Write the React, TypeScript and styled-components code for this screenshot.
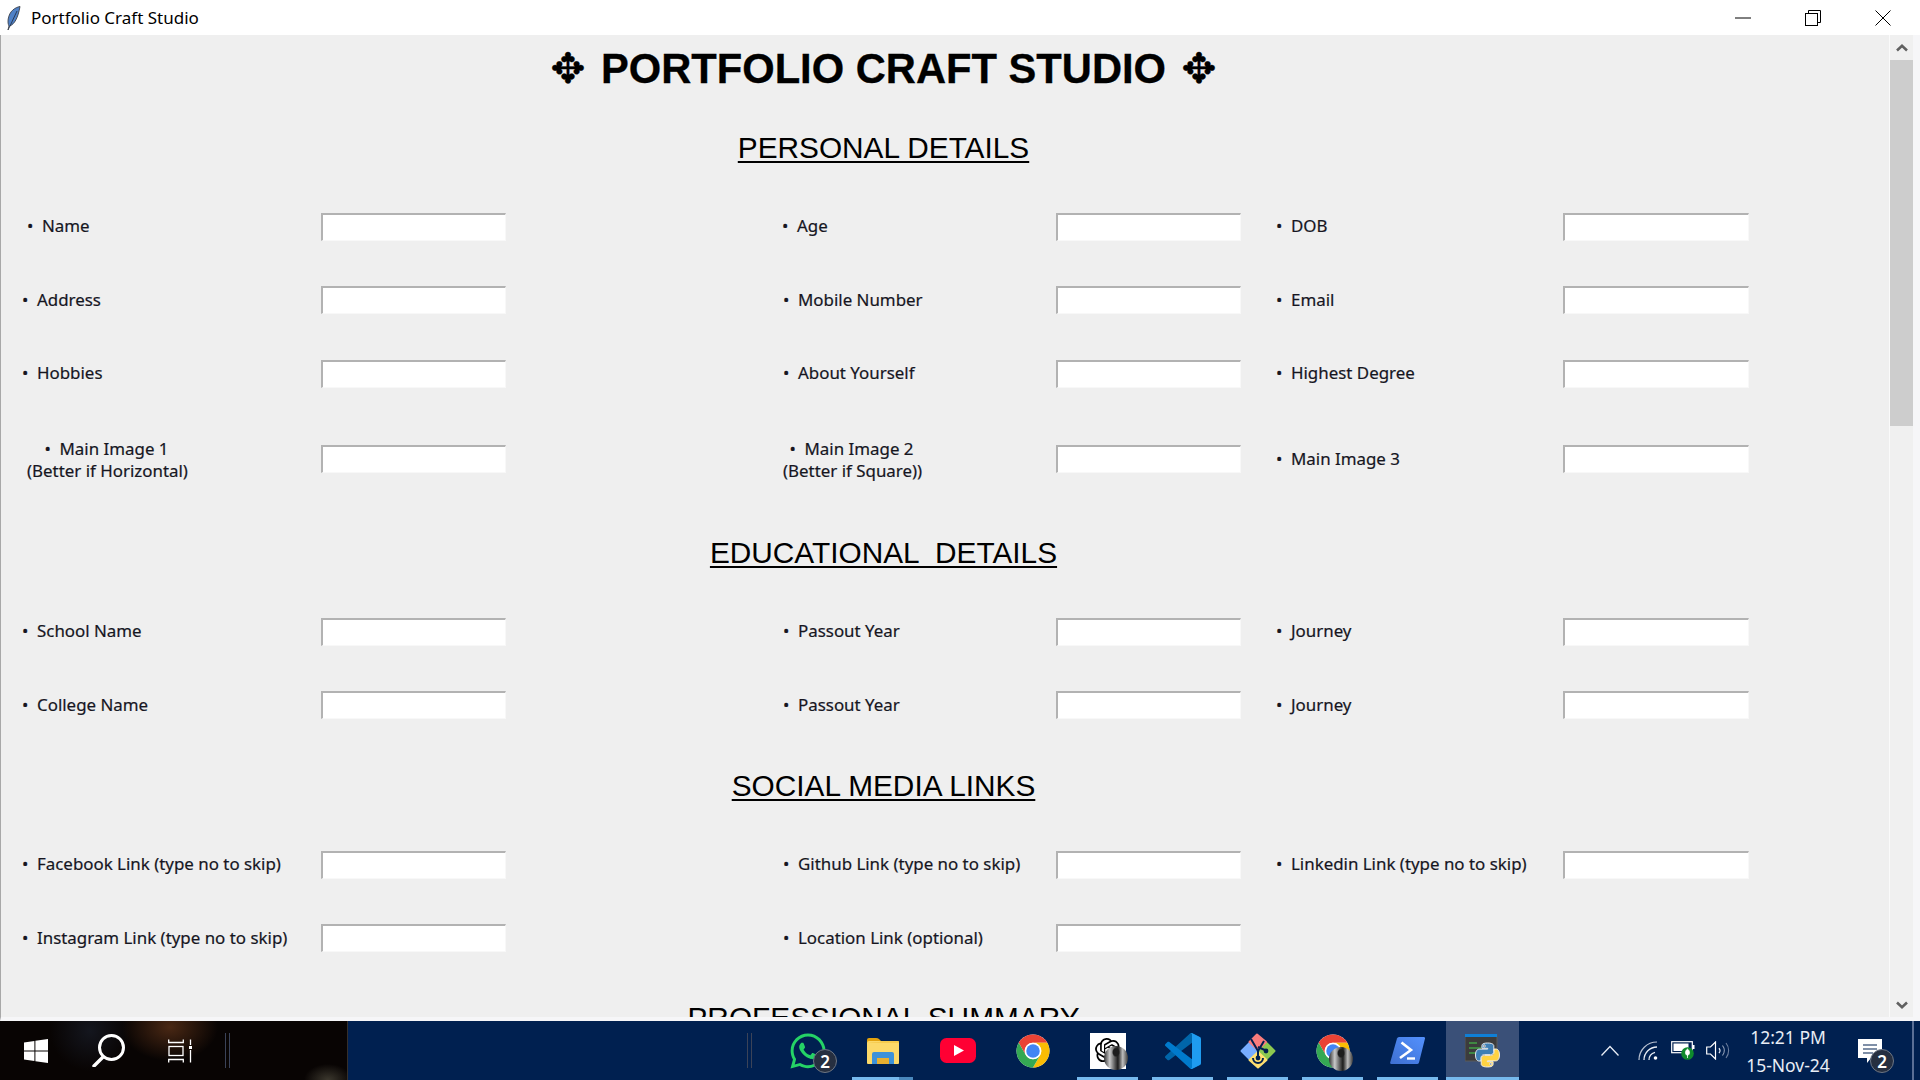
import { FaWhatsapp } from "react-icons/fa";
import { SiOpenai } from "react-icons/si";
import styled, { createGlobalStyle } from "styled-components";

const GlobalStyle = createGlobalStyle`
  html, body { margin: 0; padding: 0; width: 1920px; height: 1080px; overflow: hidden; }
  body { font-family: "Noto Sans", "Open Sans", sans-serif; background: #efefef; }
`;

const Screen = styled.div`
  display: flex;
  flex-direction: column;
  width: 1920px;
  height: 1080px;
`;

/* window title bar */
const TitleBar = styled.header`
  display: flex;
  align-items: center;
  height: 35px;
  flex: none;
  padding-left: 7px;
  background: #fff;
`;
const AppName = styled.span`
  margin-left: 10px;
  font-size: 17px;
  color: #000;
`;
const CaptionButtons = styled.div`
  display: flex;
  margin-left: auto;
  padding-right: 2px;
  align-items: center;
  height: 100%;
`;
const CaptionButton = styled.span`
  display: flex;
  justify-content: center;
  align-items: center;
  width: 70px;
  height: 100%;
`;

/* window body */
const Body = styled.div`
  display: flex;
  flex: 1;
  min-height: 0;
  background: #efefef;
  border-left: 1px solid #a8a8a8;
  border-bottom: 4px solid #f6f6f8;
`;
const Main = styled.main`
  width: 1765px;
  flex: none;
  overflow: hidden;
`;
const Spacer = styled.div`
  width: 123px;
  flex: none;
`;
const Heading = styled.h1`
  margin: 0;
  height: 68px;
  font: bold 41.7px/68px "Liberation Sans", "DejaVu Sans", sans-serif;
  color: #000;
  text-align: center;
  white-space: pre;
  -webkit-text-stroke: 0.3px #000;
`;
const Ornament = styled.span`
  margin: 0 4px;
`;
const SectionTitle = styled.h2<{ $top: number; $wordSpacing?: number }>`
  margin: ${(p) => p.$top}px 0 22.5px;
  height: 40px;
  font: normal 29.8px/40px "Liberation Sans", sans-serif;
  color: #000;
  text-align: center;
  white-space: pre;
  word-spacing: ${(p) => p.$wordSpacing ?? 0}px;
  text-decoration: underline;
  text-decoration-thickness: 2px;
  text-underline-offset: 3px;
`;
const FieldGrid = styled.section<{ $rows: string }>`
  display: grid;
  grid-template-columns: 320px 185px 550px 185px 322px 186px;
  grid-template-rows: ${(p) => p.$rows};
  align-items: center;
`;
const Label = styled.label<{ $indent: number; $width?: number }>`
  display: block;
  margin-top: ${(p) => (p.$width ? 2 : -1)}px;
  padding-left: ${(p) => p.$indent}px;
  ${(p) => (p.$width ? `width: ${p.$width}px; text-align: center;` : "")}
  font-size: 16.9px;
  line-height: 22px;
  color: #16161f;
  white-space: nowrap;
  -webkit-text-stroke: 0.2px #16161f;
`;
const Bullet = styled.span`
  display: inline-block;
  width: 15px;
  text-align: left;
`;
const TextInput = styled.input`
  box-sizing: border-box;
  display: block;
  width: 100%;
  height: 28px;
  margin: 0;
  padding: 0;
  background: #fff;
  border-style: solid;
  border-width: 2px 1px 1px 2px;
  border-color: #b2b2b2 #f8f8f8 #f8f8f8 #b2b2b2;
  outline: none;
`;

/* scroll bar */
const ScrollBar = styled.div`
  display: flex;
  flex-direction: column;
  align-items: center;
  flex: none;
  box-sizing: border-box;
  width: 24px;
  border-left: 1px solid #fafafa;
  background: #f0f0f0;
`;
const ScrollArrow = styled.div`
  display: flex;
  justify-content: center;
  align-items: center;
  height: 25px;
  width: 100%;
  flex: none;
`;
const ScrollThumb = styled.div`
  width: 100%;
  height: 366px;
  flex: none;
  background: #cdcdcd;
`;
const ScrollTrack = styled.div`
  flex: 1;
`;
const WindowEdge = styled.div`
  flex: 1;
  background: #f6f6f8;
`;

/* taskbar */
const Taskbar = styled.footer`
  display: flex;
  align-items: stretch;
  height: 59px;
  flex: none;
  background: #002050;
`;
const Wallpaper = styled.div`
  display: flex;
  align-items: center;
  box-sizing: border-box;
  width: 348px;
  flex: none;
  border-right: 1px solid #352f2a;
  background:
    radial-gradient(ellipse 48px 34px at 170px 6px, #4a2814 0%, rgba(74, 40, 20, 0) 100%),
    radial-gradient(ellipse 24px 16px at 328px 59px, #3c382e 0%, rgba(60, 56, 46, 0) 100%),
    radial-gradient(ellipse 40px 40px at 90px 10px, #14161e 0%, rgba(20, 22, 30, 0) 100%),
    #080403;
`;
const Slot = styled.div<{ $width: number }>`
  position: relative;
  display: flex;
  justify-content: center;
  align-items: center;
  width: ${(p) => p.$width}px;
  flex: none;
`;
const Dividers = styled.div<{ $left?: number }>`
  align-self: center;
  width: 3px;
  height: 35px;
  flex: none;
  margin-left: ${(p) => p.$left ?? 0}px;
  border-left: 1px solid #3b4358;
  border-right: 1px solid #3b4358;
`;
const PinnedApps = styled.div`
  display: flex;
  gap: 2px;
  margin-left: 19px;
`;
const AppSlot = styled.div<{ $active?: boolean }>`
  position: relative;
  display: flex;
  justify-content: center;
  align-items: center;
  width: 73px;
  background: ${(p) => (p.$active ? "#3a5078" : "transparent")};
`;
const RunningMark = styled.span<{ $full?: boolean }>`
  position: absolute;
  bottom: 0;
  left: ${(p) => (p.$full ? 0 : 6)}px;
  width: ${(p) => (p.$full ? 73 : 61)}px;
  height: 3px;
  background: #76b9ed;
`;
const StackedMark = styled(RunningMark)`
  width: 47px;
  &::after {
    content: "";
    position: absolute;
    left: 47px;
    width: 14px;
    height: 3px;
    background: #4a88bd;
  }
`;
const CountBadge = styled.span<{ $x: number; $y: number }>`
  position: absolute;
  left: ${(p) => p.$x}px;
  top: ${(p) => p.$y}px;
  display: flex;
  justify-content: center;
  align-items: center;
  box-sizing: border-box;
  width: 24px;
  height: 24px;
  border-radius: 50%;
  border: 1px solid #6d7684;
  background: #262f40;
  color: #fff;
  font: 600 17px/1 "Noto Sans", sans-serif;
`;
const Avatar = styled.span<{ $x: number; $y: number }>`
  position: absolute;
  left: ${(p) => p.$x}px;
  top: ${(p) => p.$y}px;
  width: 24px;
  height: 24px;
  border-radius: 50%;
  background:
    radial-gradient(ellipse 4px 5px at 50% 26%, #1d1d1d 0%, #1d1d1d 70%, rgba(0, 0, 0, 0) 100%),
    linear-gradient(90deg, #333 0%, #c9c9c9 24%, #555 46%, #1c1c1c 58%, #bdbdbd 78%, #3a3a3a 100%);
`;
const OpenAiTile = styled.span`
  display: flex;
  justify-content: center;
  align-items: center;
  width: 36px;
  height: 36px;
  background: #fff;
  color: #000;
`;
const Tray = styled.div`
  display: flex;
  margin-left: 71px;
`;
const Clock = styled.div`
  display: flex;
  flex-direction: column;
  align-items: center;
  justify-content: center;
  gap: 6px;
  width: 102px;
  flex: none;
  color: #e8edf5;
  font-size: 17.5px;
  line-height: 22px;
  white-space: nowrap;
`;
const TaskbarEnd = styled.div`
  flex: 1;
  margin-left: 11px;
  border-left: 2px solid #5a6f96;
`;

type Field = { label: string; indent: number };

const personalRows: Field[] = [
  { label: "Name", indent: 26 },
  { label: "Age", indent: 276 },
  { label: "DOB", indent: 35 },
  { label: "Address", indent: 21 },
  { label: "Mobile Number", indent: 277 },
  { label: "Email", indent: 35 },
  { label: "Hobbies", indent: 21 },
  { label: "About Yourself", indent: 277 },
  { label: "Highest Degree", indent: 35 },
];
const educationRows: Field[] = [
  { label: "School Name", indent: 21 },
  { label: "Passout Year", indent: 277 },
  { label: "Journey", indent: 35 },
  { label: "College Name", indent: 21 },
  { label: "Passout Year", indent: 277 },
  { label: "Journey", indent: 35 },
];
const socialRows: Field[] = [
  { label: "Facebook Link (type no to skip)", indent: 21 },
  { label: "Github Link (type no to skip)", indent: 277 },
  { label: "Linkedin Link (type no to skip)", indent: 35 },
  { label: "Instagram Link (type no to skip)", indent: 21 },
  { label: "Location Link (optional)", indent: 277 },
];

const renderFields = (fields: Field[]) =>
  fields.map((f, i) => [
    <Label key={`l${i}`} $indent={f.indent}>
      <Bullet>•</Bullet>
      {f.label}
    </Label>,
    <TextInput key={`i${i}`} type="text" />,
  ]);

const FeatherIcon = () => (
  <svg width="14" height="24" viewBox="0 0 14 24">
    <path
      d="M13 0.5C8 1.5 2.5 5 1.2 13C0.8 16 1 18 2 20L1 24L2.9 20C7.5 18 11 12 13 0.5Z"
      fill="#4f81c7"
      stroke="#3a3f4a"
      strokeWidth="0.9"
    />
    <path d="M10 5L3 20" stroke="#1f2a3a" strokeWidth="0.8" />
  </svg>
);

const MinimizeIcon = () => (
  <svg width="16" height="2" viewBox="0 0 16 2">
    <path d="M0 1H16" stroke="#000" strokeWidth="1" />
  </svg>
);

const RestoreIcon = () => (
  <svg width="16" height="16" viewBox="0 0 16 16" fill="none" stroke="#000" strokeWidth="1">
    <rect x="0.5" y="3.5" width="12" height="12" />
    <path d="M3.5 3.5V0.5H15.5V12.5H12.5" />
  </svg>
);

const CloseIcon = () => (
  <svg width="16" height="16" viewBox="0 0 16 16" stroke="#000" strokeWidth="1">
    <path d="M0.5 0.5L15.5 15.5M15.5 0.5L0.5 15.5" />
  </svg>
);

const ArrowIcon = ({ down }: { down?: boolean }) => (
  <svg width="12" height="8" viewBox="0 0 12 8" fill="none" stroke="#606060" strokeWidth="2.6">
    <path d={down ? "M1 1.5L6 6.2L11 1.5" : "M1 6.5L6 1.8L11 6.5"} />
  </svg>
);

const WindowsIcon = () => (
  <svg width="24" height="24" viewBox="0 0 24 24" fill="#fff">
    <polygon points="0,3.4 10.4,1.9 10.4,11.4 0,11.4" />
    <polygon points="11.4,1.8 24,0 24,11.4 11.4,11.4" />
    <polygon points="0,12.6 10.4,12.6 10.4,22.1 0,20.6" />
    <polygon points="11.4,12.6 24,12.6 24,24 11.4,22.2" />
  </svg>
);

const SearchIcon = () => (
  <svg width="33" height="33" viewBox="0 0 33 33" fill="none" stroke="#fff">
    <circle cx="19.5" cy="13.5" r="12" strokeWidth="3" />
    <path d="M11 23L2 32" strokeWidth="3.4" strokeLinecap="round" />
  </svg>
);

const TaskViewIcon = () => (
  <svg width="24" height="24" viewBox="0 0 24 24" fill="none" stroke="#fff" strokeWidth="1.3">
    <rect x="1" y="7.5" width="14" height="9" />
    <path d="M0.7 0.5V3.5H15.3V0.5M0.7 23.5V20.5H15.3V23.5M22.5 0.5V6M22.5 11V23.5" />
    <rect x="21" y="7" width="3" height="3" fill="#fff" stroke="none" />
  </svg>
);

const ExplorerIcon = () => (
  <svg width="32" height="26" viewBox="0 0 32 26">
    <path d="M0 5V2Q0 0 2 0H9Q11 0 12 1L15 4V5Z" fill="#e3a20d" />
    <path d="M0 5Q0 3 2 3H31Q32 3 32 4V25Q32 26 31 26H1Q0 26 0 25Z" fill="#fcd969" />
    <path d="M0 5Q6 4 12 4L15 3H31Q32 3 32 5Z" fill="#f4c542" opacity="0.7" />
    <path d="M5 26V16Q5 14 7 14H25Q27 14 27 16V26H22V20H10V26Z" fill="#3d92d9" />
    <rect x="10" y="20" width="12" height="6" fill="#e8b030" />
  </svg>
);

const YoutubeIcon = () => (
  <svg width="36" height="25" viewBox="0 0 36 25">
    <rect width="36" height="25" rx="6.5" fill="#ff0033" />
    <polygon points="14,7 14,18 24,12.5" fill="#fff" />
  </svg>
);

const CHROME_SECTOR =
  "M4.95 13A22 22 0 0 1 43.05 13H24A11 11 0 0 0 14.47 29.5Z";

const ChromeIcon = () => (
  <svg width="36" height="36" viewBox="0 0 48 48">
    <circle cx="24" cy="24" r="22" fill="#fff" />
    <path d={CHROME_SECTOR} fill="#ea4335" />
    <path d={CHROME_SECTOR} fill="#fbbc04" transform="rotate(120 24 24)" />
    <path d={CHROME_SECTOR} fill="#34a853" transform="rotate(240 24 24)" />
    <circle cx="24" cy="24" r="11" fill="#fff" />
    <circle cx="24" cy="24" r="9" fill="#4285f4" />
  </svg>
);

const VsCodeIcon = () => (
  <svg width="36" height="36" viewBox="0 0 100 100">
    <path
      d="M96.46 10.8L75.86 0.88C73.47 -0.27 70.62 0.21 68.75 2.08L1.3 63.58C-0.52 65.24 -0.51 68.09 1.3 69.75L6.81 74.75C8.3 76.1 10.53 76.2 12.13 74.99L93.36 13.37C96.09 11.3 100 13.25 100 16.67V16.43C100 14.03 98.62 11.84 96.46 10.8Z"
      fill="#0065a9"
    />
    <path
      d="M96.46 89.2L75.86 99.12C73.47 100.27 70.62 99.79 68.75 97.92L1.3 36.42C-0.52 34.76 -0.51 31.91 1.3 30.25L6.81 25.25C8.3 23.9 10.53 23.8 12.13 25.01L93.36 86.63C96.09 88.7 100 86.75 100 83.33V83.57C100 85.97 98.62 88.16 96.46 89.2Z"
      fill="#007acc"
    />
    <path
      d="M75.86 99.13C73.47 100.27 70.62 99.79 68.75 97.92C71.06 100.22 75 98.59 75 95.33V4.67C75 1.41 71.06 -0.22 68.75 2.08C70.62 0.21 73.47 -0.27 75.86 0.87L96.46 10.78C98.62 11.82 100 14.01 100 16.41V83.59C100 85.99 98.62 88.18 96.46 89.22L75.86 99.13Z"
      fill="#1f9cf0"
    />
  </svg>
);

const KrakenIcon = () => (
  <svg width="36" height="36" viewBox="0 0 36 36" strokeLinejoin="round">
    <polygon points="1.5,18 9.5,10 17.5,18 9.5,26" fill="#78adff" stroke="#78adff" strokeWidth="2" />
    <polygon points="18.5,18 26.5,10 34.5,18 26.5,26" fill="#8cc850" stroke="#8cc850" strokeWidth="2" />
    <polygon points="9.5,9 17,1.5 26,9 18,17" fill="#f97c7c" stroke="#f97c7c" strokeWidth="2" />
    <polygon points="9.5,27 18,19 26.5,27 18,34.5" fill="#ffe070" stroke="#ffe070" strokeWidth="2" />
    <g fill="none" stroke="#002050" strokeWidth="2">
      <path d="M11 6L18 18L24 8" />
      <path d="M18 18V24" />
      <path d="M13 25A5 5 0 0 0 23 25" />
      <path d="M18 14L27 18" />
    </g>
    <circle cx="18" cy="25" r="2.4" fill="#002050" />
    <circle cx="26" cy="18" r="2.4" fill="#002050" />
  </svg>
);

const PowerShellIcon = () => (
  <svg width="35" height="27" viewBox="0 0 35 27">
    <defs>
      <linearGradient id="psFill" x1="1" y1="0" x2="0" y2="1">
        <stop offset="0" stopColor="#5391fe" />
        <stop offset="1" stopColor="#3e6fd0" />
      </linearGradient>
    </defs>
    <path
      d="M7 1.5Q7.5 0 9 0H33.5Q35.3 0 35 1.5L29 25.5Q28.5 27 27 27H1.5Q-0.2 27 0.2 25.5Z"
      fill="url(#psFill)"
    />
    <path d="M11.5 5.5L21 13L10 21" fill="none" stroke="#fff" strokeWidth="2.6" />
    <path d="M17 21.5H25" stroke="#fff" strokeWidth="2.4" />
  </svg>
);

const PYTHON_HALF =
  "M12 0C6 0 6.4 2.6 6.4 2.6V5.3H12.2V6.1H4C4 6.1 0 5.7 0 12C0 18.2 3.5 18 3.5 18H5.5V15.1C5.5 15.1 5.4 11.6 9 11.6H15C15 11.6 18.3 11.7 18.3 8.4V3C18.3 3 18.8 0 12 0ZM8.7 1.9A1.1 1.1 0 1 1 8.7 4.1A1.1 1.1 0 1 1 8.7 1.9Z";

const PythonIdleIcon = () => (
  <svg width="36" height="34" viewBox="0 0 36 34">
    <rect x="0" y="1" width="32" height="26" fill="#3c3c3c" stroke="#5b5b5b" />
    <rect x="0" y="0" width="32" height="3" fill="#0f7fd6" />
    <path d="M4 9H12M4 14H16M4 19H11" stroke="#41a045" strokeWidth="1.3" />
    <g transform="translate(10.5 9)" stroke="#f5f5f5" strokeWidth="0.9" fillRule="evenodd">
      <path d={PYTHON_HALF} fill="#3f7fb5" />
      <path d={PYTHON_HALF} fill="#ffd343" transform="rotate(180 12 12)" />
    </g>
  </svg>
);

const ChevronIcon = () => (
  <svg width="18" height="11" viewBox="0 0 18 11" fill="none" stroke="#e8edf5" strokeWidth="1.3">
    <path d="M0.5 10.5L9 1.5L17.5 10.5" />
  </svg>
);

const WifiIcon = () => (
  <svg width="20" height="19" viewBox="0 0 20 19" fill="none">
    <path d="M1 19A18 18 0 0 1 19 1" stroke="#b9c2d2" strokeWidth="1.2" />
    <path d="M6 19A13 13 0 0 1 19 6" stroke="#e8edf5" strokeWidth="1.3" />
    <path d="M11 19A8 8 0 0 1 17 11.3" stroke="#e8edf5" strokeWidth="1.3" />
    <circle cx="17.5" cy="17" r="1.8" fill="#fff" />
  </svg>
);

const BatteryIcon = () => (
  <svg width="24" height="22" viewBox="0 0 24 22">
    <rect x="0.7" y="1.7" width="20.6" height="11" fill="none" stroke="#fff" strokeWidth="1.2" />
    <rect x="2.5" y="3.5" width="15" height="7.5" fill="#fff" />
    <rect x="21.5" y="5" width="2" height="4" fill="#fff" />
    <circle cx="16.5" cy="13.5" r="6.3" fill="#0f8a2c" />
    <path d="M16.5 9C13.8 11 13.8 14.5 16.5 15.5C19.2 14.5 19.2 11 16.5 9ZM16.5 13V18" fill="#fff" stroke="#fff" strokeWidth="0.8" />
  </svg>
);

const SpeakerIcon = () => (
  <svg width="24" height="19" viewBox="0 0 24 19" fill="none">
    <path d="M0.7 6H4.5L9.5 1V18L4.5 13H0.7Z" stroke="#fff" strokeWidth="1.2" />
    <path d="M13 7A4 4 0 0 1 13 12" stroke="#e8edf5" strokeWidth="1.2" />
    <path d="M16.5 4.5A8 8 0 0 1 16.5 14.5" stroke="#9aa8bf" strokeWidth="1.1" />
    <path d="M20 2A12 12 0 0 1 20 17" stroke="#6d7f9f" strokeWidth="1.1" />
  </svg>
);

const NotificationIcon = () => (
  <svg width="24" height="24" viewBox="0 0 24 24">
    <path d="M0 0H24V19H13L9 24V19H0Z" fill="#fff" />
    <path d="M5 6H19M5 10H19M5 14H15" stroke="#002050" strokeWidth="1.2" />
  </svg>
);

const App = () => {
  return (
    <>
      <GlobalStyle />
      <Screen>
        <TitleBar>
          <FeatherIcon />
          <AppName>Portfolio Craft Studio</AppName>
          <CaptionButtons>
            <CaptionButton>
              <MinimizeIcon />
            </CaptionButton>
            <CaptionButton>
              <RestoreIcon />
            </CaptionButton>
            <CaptionButton>
              <CloseIcon />
            </CaptionButton>
          </CaptionButtons>
        </TitleBar>

        <Body>
          <Main>
            <Heading>
              <Ornament>✥</Ornament> PORTFOLIO CRAFT STUDIO <Ornament>✥</Ornament>
            </Heading>

            <SectionTitle $top={24.5}>PERSONAL DETAILS</SectionTitle>
            <FieldGrid $rows="73.5px 73.5px 73.5px 97.5px">
              {renderFields(personalRows)}
              <Label $indent={26} $width={159}>
                <Bullet>•</Bullet>Main Image 1
                <br />
                (Better if Horizontal)
              </Label>
              <TextInput type="text" />
              <Label $indent={277} $width={137}>
                <Bullet>•</Bullet>Main Image 2
                <br />
                (Better if Square))
              </Label>
              <TextInput type="text" />
              <Label $indent={35}>
                <Bullet>•</Bullet>Main Image 3
              </Label>
              <TextInput type="text" />
            </FieldGrid>

            <SectionTitle $top={24.5}>EDUCATIONAL  DETAILS</SectionTitle>
            <FieldGrid $rows="73.5px 73.5px">{renderFields(educationRows)}</FieldGrid>

            <SectionTitle $top={23.5}>SOCIAL MEDIA LINKS</SectionTitle>
            <FieldGrid $rows="73.5px 73.5px">{renderFields(socialRows)}</FieldGrid>

            <SectionTitle $top={22.5} $wordSpacing={-3.5}>PROFESSIONAL  SUMMARY</SectionTitle>
          </Main>
          <Spacer />
          <ScrollBar>
            <ScrollArrow>
              <ArrowIcon />
            </ScrollArrow>
            <ScrollThumb />
            <ScrollTrack />
            <ScrollArrow>
              <ArrowIcon down />
            </ScrollArrow>
          </ScrollBar>
          <WindowEdge />
        </Body>

        <Taskbar>
          <Wallpaper>
            <Slot $width={72}>
              <WindowsIcon />
            </Slot>
            <Slot $width={72}>
              <SearchIcon />
            </Slot>
            <Slot $width={72}>
              <TaskViewIcon />
            </Slot>
            <Dividers $left={9} />
          </Wallpaper>
          <Dividers $left={399} />
          <PinnedApps>
            <AppSlot>
              <FaWhatsapp size={40} color="#25d366" />
              <CountBadge $x={42} $y={28}>2</CountBadge>
            </AppSlot>
            <AppSlot>
              <ExplorerIcon />
              <StackedMark />
            </AppSlot>
            <AppSlot>
              <YoutubeIcon />
            </AppSlot>
            <AppSlot>
              <ChromeIcon />
            </AppSlot>
            <AppSlot>
              <OpenAiTile>
                <SiOpenai size={26} />
              </OpenAiTile>
              <Avatar $x={33} $y={25} />
              <RunningMark />
            </AppSlot>
            <AppSlot>
              <VsCodeIcon />
              <RunningMark />
            </AppSlot>
            <AppSlot>
              <KrakenIcon />
              <RunningMark />
            </AppSlot>
            <AppSlot>
              <ChromeIcon />
              <Avatar $x={33} $y={26} />
              <RunningMark />
            </AppSlot>
            <AppSlot>
              <PowerShellIcon />
              <RunningMark />
            </AppSlot>
            <AppSlot $active>
              <PythonIdleIcon />
              <RunningMark $full />
            </AppSlot>
          </PinnedApps>
          <Tray>
            <Slot $width={40}>
              <ChevronIcon />
            </Slot>
            <Slot $width={36}>
              <WifiIcon />
            </Slot>
            <Slot $width={33}>
              <BatteryIcon />
            </Slot>
            <Slot $width={38}>
              <SpeakerIcon />
            </Slot>
            <Clock>
              <span>12:21 PM</span>
              <span>15-Nov-24</span>
            </Clock>
            <Slot $width={62}>
              <NotificationIcon />
              <CountBadge $x={31} $y={28}>2</CountBadge>
            </Slot>
          </Tray>
          <TaskbarEnd />
        </Taskbar>
      </Screen>
    </>
  );
};

export default App;
